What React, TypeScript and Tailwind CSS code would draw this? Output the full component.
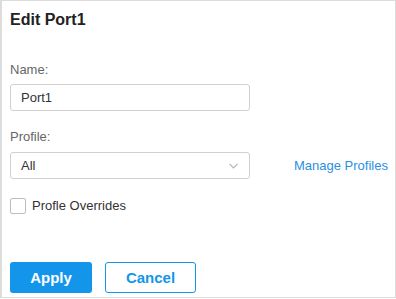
import { useState } from 'react';

export default function App() {
  const [name, setName] = useState('Port1');
  const [overrides, setOverrides] = useState(false);

  return (
    <div
      className="w-[396px] h-[298px] bg-white border-t border-r border-b border-l-2 border-[#dcdcdc] pt-[9px] pl-[8px] text-[13px] leading-4 text-[#333]"
      style={{ fontFamily: '"Liberation Sans", Arial, sans-serif' }}
    >
      <h1 className="text-[16px] leading-5 font-bold text-[#222]">Edit Port1</h1>

      {/* name */}
      <label className="block mt-[32px] text-[#666]">Name:</label>
      <input
        value={name}
        onChange={(e) => setName(e.target.value)}
        className="mt-[6px] block w-[240px] h-[27px] px-[10px] border border-[#d0d0d0] rounded-[3px] text-[13px] text-[#333] outline-none"
      />

      {/* profile */}
      <label className="block mt-[18px] text-[#666]">Profile:</label>
      <div className="mt-[7px] flex items-center">
        <div className="w-[240px] h-[27px] px-[10px] flex items-center justify-between border border-[#d0d0d0] rounded-[3px]">
          <span className="text-[#333]">All</span>
          <svg width="9" height="6" viewBox="0 0 9 6" fill="none" stroke="#b4b4b4" strokeWidth="1.2" className="mr-[1px]">
            <polyline points="0.5,0.8 4.5,4.8 8.5,0.8" />
          </svg>
        </div>
        <a className="ml-[44px] text-[#2a8fe4] cursor-pointer">Manage Profiles</a>
      </div>

      {/* overrides */}
      <label className="mt-[19px] flex items-center gap-[6px] cursor-pointer">
        <span
          onClick={() => setOverrides((v) => !v)}
          className={
            'w-4 h-4 rounded-[2px] border ' +
            (overrides ? 'bg-[#1396ea] border-[#1396ea]' : 'bg-white border-[#bdbdbd]')
          }
        />
        <span className="text-[#333]">Profle Overrides</span>
      </label>

      {/* actions */}
      <div className="mt-[48px] flex gap-[13px]">
        <button className="w-[82px] h-[31px] rounded-[3px] bg-[#1396ea] text-white text-[15px] font-bold">
          Apply
        </button>
        <button className="w-[91px] h-[31px] rounded-[3px] border border-[#1396ea] bg-white text-[#1396ea] text-[15px] font-bold">
          Cancel
        </button>
      </div>
    </div>
  );
}
